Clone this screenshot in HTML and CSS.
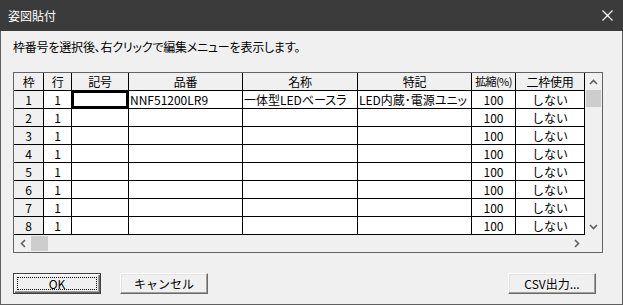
FILE: index.html
```html
<!DOCTYPE html>
<html lang="ja">
<head>
  <meta charset="UTF-8">
  <meta name="viewport" content="width=device-width, initial-scale=1.0">
  <title>姿図貼付</title>
  <link rel="stylesheet" href="styles.css">
</head>
<body>
  <div class="window">
    <div class="titlebar">
      <span class="title">姿図貼付</span>
      <svg class="close" width="11" height="11" viewBox="0 0 11 11">
        <path d="M0.5 0.5 L10.5 10.5 M10.5 0.5 L0.5 10.5" stroke="#fff" stroke-width="1.2" fill="none"/>
      </svg>
    </div>

    <div class="dialog-body">
      <p class="hint">枠番号を選択後、右クリックで編集メニューを表示します。</p>

      <div class="grid-box">
        <div class="sheet">
          <div class="row head">
            <div class="cell">枠</div>
            <div class="cell">行</div>
            <div class="cell">記号</div>
            <div class="cell">品番</div>
            <div class="cell">名称</div>
            <div class="cell">特記</div>
            <div class="cell narrow">拡縮(%)</div>
            <div class="cell">二枠使用</div>
          </div>
          <div class="row">
            <div class="cell fixed">1</div>
            <div class="cell">1</div>
            <div class="cell selected"></div>
            <div class="cell left">NNF51200LR9</div>
            <div class="cell left">一体型LEDベースラ</div>
            <div class="cell left">LED内蔵･電源ユニッ</div>
            <div class="cell">100</div>
            <div class="cell">しない</div>
          </div>
          <div class="row">
            <div class="cell fixed">2</div><div class="cell">1</div><div class="cell"></div><div class="cell"></div>
            <div class="cell"></div><div class="cell"></div><div class="cell">100</div><div class="cell">しない</div>
          </div>
          <div class="row">
            <div class="cell fixed">3</div><div class="cell">1</div><div class="cell"></div><div class="cell"></div>
            <div class="cell"></div><div class="cell"></div><div class="cell">100</div><div class="cell">しない</div>
          </div>
          <div class="row">
            <div class="cell fixed">4</div><div class="cell">1</div><div class="cell"></div><div class="cell"></div>
            <div class="cell"></div><div class="cell"></div><div class="cell">100</div><div class="cell">しない</div>
          </div>
          <div class="row">
            <div class="cell fixed">5</div><div class="cell">1</div><div class="cell"></div><div class="cell"></div>
            <div class="cell"></div><div class="cell"></div><div class="cell">100</div><div class="cell">しない</div>
          </div>
          <div class="row">
            <div class="cell fixed">6</div><div class="cell">1</div><div class="cell"></div><div class="cell"></div>
            <div class="cell"></div><div class="cell"></div><div class="cell">100</div><div class="cell">しない</div>
          </div>
          <div class="row">
            <div class="cell fixed">7</div><div class="cell">1</div><div class="cell"></div><div class="cell"></div>
            <div class="cell"></div><div class="cell"></div><div class="cell">100</div><div class="cell">しない</div>
          </div>
          <div class="row">
            <div class="cell fixed">8</div><div class="cell">1</div><div class="cell"></div><div class="cell"></div>
            <div class="cell"></div><div class="cell"></div><div class="cell">100</div><div class="cell">しない</div>
          </div>
        </div>

        <!-- 縦スクロールバー -->
        <div class="vscroll">
          <div class="arrow-btn">
            <svg width="9" height="6" viewBox="0 0 9 6"><path d="M1 5 L4.5 1.5 L8 5" stroke="#606060" stroke-width="1.6" fill="none"/></svg>
          </div>
          <div class="vthumb"></div>
          <div class="arrow-btn down">
            <svg width="9" height="6" viewBox="0 0 9 6"><path d="M1 1 L4.5 4.5 L8 1" stroke="#606060" stroke-width="1.6" fill="none"/></svg>
          </div>
        </div>

        <!-- 横スクロールバー -->
        <div class="hscroll">
          <div class="arrow-btn">
            <svg width="6" height="9" viewBox="0 0 6 9"><path d="M5 1 L1.5 4.5 L5 8" stroke="#606060" stroke-width="1.6" fill="none"/></svg>
          </div>
          <div class="hthumb"></div>
          <div class="arrow-btn right">
            <svg width="6" height="9" viewBox="0 0 6 9"><path d="M1 1 L4.5 4.5 L1 8" stroke="#606060" stroke-width="1.6" fill="none"/></svg>
          </div>
        </div>
        <div class="corner"></div>
      </div>

      <div class="button-group">
        <button type="button" class="btn default"><span class="focus">OK</span></button>
        <button type="button" class="btn">キャンセル</button>
        <button type="button" class="btn csv">CSV出力...</button>
      </div>
    </div>
  </div>
</body>
</html>
```

FILE: styles.css
```css
body {
  margin: 0;
  font-family: "Noto Sans CJK JP", "Noto Sans", sans-serif;
  font-size: 12px;
  color: #000;
  background: #f0f0f0;
}

.window {
  width: 623px;
  height: 305px;
}

.titlebar {
  height: 31px;
  background-color: #3b3b3b;
  color: #fff;
  display: flex;
  align-items: center;
  justify-content: space-between;
  padding: 0 10px 0 8px;
  box-sizing: border-box;
}

.title {
  font-size: 12px;
  line-height: 14px;
}

.close {
  display: block;
}

.dialog-body {
  height: 274px;
  box-sizing: border-box;
  border: 1px solid #5f5f5f;
  border-top: none;
  padding: 9px 0 0 12px;
  background-color: #f0f0f0;
}

.hint {
  margin: 0 0 18px;
  line-height: 14px;
  font-feature-settings: "palt";
  letter-spacing: -0.2px;
}

.grid-box {
  width: 590px;
  height: 181px;
  box-sizing: border-box;
  border: 1px solid #646464;
  display: grid;
  grid-template-columns: 571px 17px;
  grid-template-rows: 162px 17px;
  background-color: #fff;
}

.row {
  display: grid;
  grid-template-columns: 30px 28px 57px 114px 115px 114px 44px 69px;
  height: 18px;
}

.cell {
  box-sizing: border-box;
  border-right: 1px solid #000;
  border-bottom: 1px solid #000;
  line-height: 17px;
  text-align: center;
  white-space: nowrap;
  overflow: hidden;
  background-color: #fff;
}

.cell.left {
  text-align: left;
  padding-left: 1px;
  font-feature-settings: "palt";
}

.head .cell, .cell.fixed {
  background-color: #f0f0f0;
}

.head .cell {
  letter-spacing: -0.3px;
}

.head .cell.narrow {
  font-size: 11px;
  letter-spacing: -0.6px;
}

.cell.selected {
  box-shadow: inset 0 0 0 2px #000;
}

.vscroll, .hscroll, .corner {
  background-color: #f0f0f0;
}

.vscroll {
  display: flex;
  flex-direction: column;
}

.hscroll {
  display: flex;
}

.arrow-btn {
  width: 17px;
  height: 17px;
  display: flex;
  align-items: center;
  justify-content: center;
  flex: none;
}

.arrow-btn.down {
  margin-top: auto;
}

.arrow-btn.right {
  margin-left: auto;
}

.vthumb {
  width: 15px;
  height: 17px;
  margin-left: 1px;
  background-color: #cdcdcd;
}

.hthumb {
  width: 17px;
  height: 15px;
  margin-top: 1px;
  background-color: #cdcdcd;
}

.button-group {
  display: flex;
  width: 583px;
  margin-top: 20px;
  gap: 19px;
}

.btn {
  width: 88px;
  height: 21px;
  padding: 0;
  font-family: inherit;
  font-size: 12px;
  color: #000;
  background-color: #f0f0f0;
  border: 1px solid;
  border-color: #fff #696969 #696969 #fff;
  box-shadow: inset -1px -1px #a0a0a0, inset 1px 1px #e3e3e3;
  display: flex;
  align-items: center;
  justify-content: center;
  line-height: 14px;
}

.btn.default {
  border: 1px solid #404040;
  box-shadow: inset 1px 1px #fff, inset -1px -1px #696969, inset -2px -2px #a0a0a0;
  padding: 3px;
}

.focus {
  flex: 1;
  align-self: stretch;
  display: flex;
  align-items: center;
  justify-content: center;
  border: 1px dotted #000;
}

.btn.csv {
  margin-left: auto;
}
```
